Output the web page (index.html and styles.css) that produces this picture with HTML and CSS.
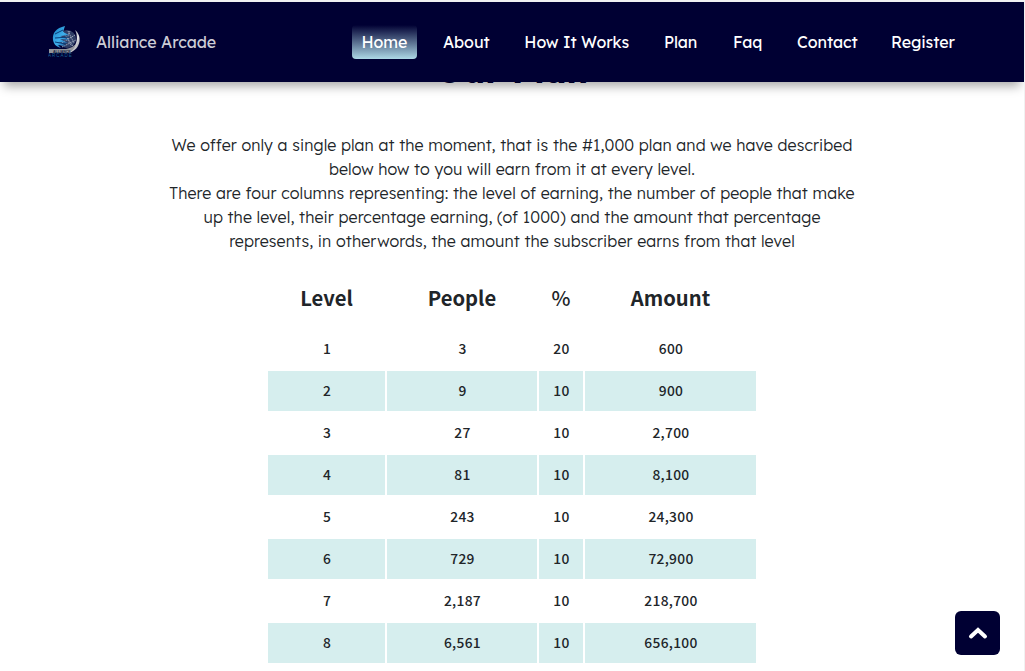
FILE: index.html
```html
<!DOCTYPE html>
<html lang="en">
<head>
<meta charset="utf-8">
<title>Alliance Arcade</title>
<link rel="stylesheet" href="styles.css">
</head>
<body>
<header class="header">
  <a class="brand">
    <svg class="logo" viewBox="0 0 34 34">
      <defs>
        <linearGradient id="globe" x1="0" y1="0" x2="1" y2="1"><stop offset="0" stop-color="#167fc0"/><stop offset=".5" stop-color="#3eb0ed"/><stop offset="1" stop-color="#123e86"/></linearGradient>
        <linearGradient id="silver" x1="0" y1="0" x2="1" y2="1"><stop offset="0" stop-color="#41465f"/><stop offset=".6" stop-color="#e5e5e8"/><stop offset="1" stop-color="#777783"/></linearGradient>
      </defs>
      <path d="M27 5C34 10 34 24 21 28L18 26C29 24 31 13 27 5Z" fill="url(#silver)"/>
      <circle cx="19" cy="14" r="9" fill="#303e66"/>
      <path d="M15 7l10 14M20 6l6 12M12 19l15-9M14 22l14-7M22 6q-5 9 2 15" fill="none" stroke="#b7bfce" stroke-width=".8" stroke-dasharray="1.5 .8"/>
      <path d="M17 1C8 3 4 8 5 15C6 20 9 22 13 23L10 20L18 21L11 17L20 18L12 14L22 15L12 11L21 10L15 7Z" fill="url(#globe)"/>
      <path d="M7 9l8-4M7 13l14-1M7 17l11 2" stroke="#093e79" fill="none"/>
      <path d="M1 24L18 24Q24 23 28 19Q25 28 18 28H1Z" fill="#92949b"/>
      <text class="logo-name" x="5" y="27.7">ALLIANCE</text>
      <text class="logo-sub" x="0" y="32">ARCADE</text>
    </svg>
    <span class="brand-name">Alliance Arcade</span>
  </a>
  <nav class="nav">
    <a class="link active">Home</a><a class="link about">About</a><a class="link how">How It Works</a><a class="link plan">Plan</a><a class="link faq">Faq</a><a class="link contact">Contact</a><a class="link register">Register</a>
  </nav>
</header>
<main class="main">
  <h2 class="title">Our Plan</h2>
  <p class="intro">We offer only a single plan at the moment, that is the #1,000 plan and we have described below how to you will earn from it at every level.<br>There are four columns representing: the level of earning, the number of people that make up the level, their percentage earning, (of 1000) and the amount that percentage represents, in otherwords, the amount the subscriber earns from that level</p>
  <table class="levels">
    <colgroup><col class="c-level"><col class="c-people"><col class="c-percent"><col class="c-amount"></colgroup>
    <thead><tr><th>Level</th><th>People</th><th class="percent">%</th><th>Amount</th></tr></thead>
    <tbody>
      <tr><td>1</td><td>3</td><td>20</td><td>600</td></tr>
      <tr><td>2</td><td>9</td><td>10</td><td>900</td></tr>
      <tr><td>3</td><td>27</td><td>10</td><td>2,700</td></tr>
      <tr><td>4</td><td>81</td><td>10</td><td>8,100</td></tr>
      <tr><td>5</td><td>243</td><td>10</td><td>24,300</td></tr>
      <tr><td>6</td><td>729</td><td>10</td><td>72,900</td></tr>
      <tr><td>7</td><td>2,187</td><td>10</td><td>218,700</td></tr>
      <tr><td>8</td><td>6,561</td><td>10</td><td>656,100</td></tr>
    </tbody>
  </table>
</main>
<a class="to-top" aria-label="Back to top"><svg class="chevron" viewBox="0 0 20 14"><path d="M3 10.5L10 4L17 10.5"/></svg></a>
</body>
</html>
```

FILE: styles.css
```css
* { box-sizing: border-box; }
body {
  margin: 0;
  height: 671px;
  overflow: hidden;
  border-top: 2px solid #f0f1f3;
  border-right: 1px solid #f1f1f1;
  background: #fff;
  color: #212529;
  font: 300 16px/24px Lexend, Inter, sans-serif;
}
.header {
  position: relative;
  z-index: 2;
  display: flex;
  height: 80px;
  background: #000033;
  box-shadow: 0 8px 10px -4px rgba(0, 0, 0, .35);
}
.brand { display: flex; align-items: center; width: 352px; padding-left: 48px; }
.logo { width: 34px; height: 34px; margin-right: 14px; }
.logo-name { font: bold 3.5px "Liberation Sans", sans-serif; fill: #101b40; }
.logo-sub { font: 4.5px "Liberation Sans", sans-serif; letter-spacing: 1px; fill: #176296; }
.brand-name { color: #ccccd6; font-weight: 400; letter-spacing: -.08px; }
.nav { display: flex; align-items: center; color: #fff; font-weight: 400; letter-spacing: -.08px; }
.link { white-space: nowrap; }
.active {
  width: 65px;
  height: 34px;
  margin-right: 26px;
  padding: 5px 0 0 9.5px;
  border-radius: 4px;
  background: linear-gradient(#000033, #add8e6);
}
.about { width: 81.3px; }
.how { width: 139.7px; }
.plan { width: 69px; }
.faq { width: 64px; }
.contact { width: 94px; }
.title {
  margin: -35px 0 0;
  height: 48px;
  color: #000033;
  font-size: 34px;
  line-height: 48px;
  font-weight: 700;
  text-align: center;
}
.intro { width: 700px; margin: 38px auto 0; text-align: center; letter-spacing: .11px; }
.levels {
  width: 492px;
  margin: 16px auto 0;
  table-layout: fixed;
  border-spacing: 2px;
  font-family: "Source Sans Pro", "Noto Sans CJK JP", sans-serif;
  text-align: center;
}
.c-level { width: 117px; }
.c-people { width: 150px; }
.c-percent { width: 44px; }
.c-amount { width: 171px; }
th { height: 56px; padding: 0 0 3px; font-size: 20.2px; font-weight: 700; }
.percent { font-weight: 500; }
td { height: 40px; padding: 0 0 2px 1px; font-size: 13.8px; font-weight: 500; letter-spacing: .3px; }
tbody tr:nth-child(even) td { background: #d6eeee; }
.to-top {
  position: fixed;
  right: 25px;
  bottom: 16px;
  z-index: 3;
  display: grid;
  place-items: center;
  width: 45px;
  height: 44px;
  border-radius: 6px;
  background: #000033;
}
.chevron { width: 20px; height: 14px; fill: none; stroke: #fff; stroke-width: 4; stroke-linecap: round; }
```
